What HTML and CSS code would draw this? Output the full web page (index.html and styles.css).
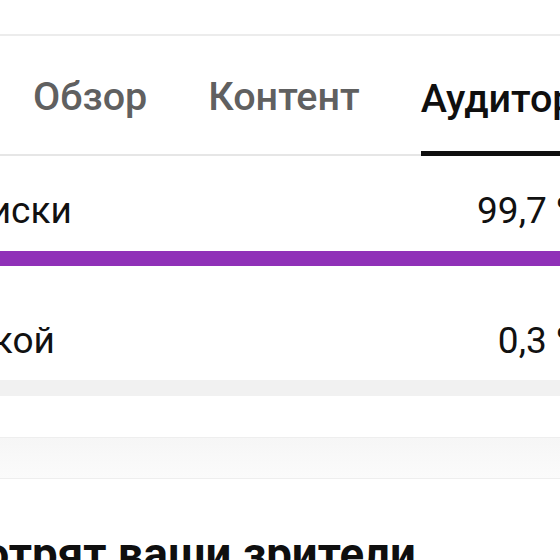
FILE: index.html
```html
<!DOCTYPE html>
<html lang="ru">
<head>
<meta charset="utf-8">
<title>Аудитория</title>
<link rel="stylesheet" href="styles.css">
</head>
<body>
<div class="screen">
  <div class="top-space"></div>
  <nav class="tabs">
    <span class="tab">Обзор</span>
    <span class="tab">Контент</span>
    <span class="tab active">Аудитория</span>
    <span class="tab">Доход</span>
  </nav>
  <section class="stats">
    <div class="row">
      <span class="label">Без подписки</span>
      <span class="value">99,7 %</span>
    </div>
    <div class="bar"><div class="bar-fill" style="width:99.7%"></div></div>
    <div class="row row-second">
      <span class="label">С подпиской</span>
      <span class="value">0,3 %</span>
    </div>
  </section>
  <div class="divider"></div>
  <div class="spacer"></div>
  <div class="card-strip"></div>
  <h2 class="heading">Что смотрят ваши зрители</h2>
</div>
</body>
</html>
```

FILE: styles.css
```css
html, body {
  margin: 0;
  padding: 0;
  background: #ffffff;
  overflow: hidden;
}

body {
  width: 560px;
  height: 560px;
  font-family: Roboto, "Noto Sans", Arial, sans-serif;
  color: #0f0f0f;
}

.screen {
  width: 820px;
  margin-left: -230px;
  display: flex;
  flex-direction: column;
}

.top-space {
  height: 34px;
  border-bottom: 2px solid #ececec;
}

.tabs {
  display: flex;
  align-items: flex-end;
  gap: 61px;
  padding-left: 263px;
  height: 118px;
  border-bottom: 2px solid #e6e6e6;
  white-space: nowrap;
}

.tab {
  font-size: 39.5px;
  font-weight: 500;
  line-height: 44px;
  color: #606060;
  padding-bottom: 35px;
}

.tab.active {
  color: #0f0f0f;
  padding-bottom: 30px;
  border-bottom: 5px solid #0f0f0f;
  margin-bottom: -2px;
}

.stats {
  padding: 34px 0 18px 0;
}

.row {
  display: flex;
  justify-content: space-between;
  padding: 0 7px 0 64px;
  font-size: 37px;
  line-height: 42px;
  color: #111111;
}

.bar {
  margin-top: 19px;
  height: 15px;
  background: #f4e4f7;
}

.bar-fill {
  height: 100%;
  background: #9031b8;
}

.row-second {
  margin-top: 54px;
}

.divider {
  height: 16px;
  background: #f1f1f1;
}

.spacer {
  height: 41px;
}

.card-strip {
  height: 40px;
  background: linear-gradient(#f6f6f6, #fbfbfb);
  border-top: 1px solid #eeeeee;
  border-bottom: 1px solid #eeeeee;
}

.heading {
  margin: 50px 0 0 0;
  padding-left: 64px;
  font-size: 45.6px;
  font-weight: 700;
  line-height: 52px;
  color: #0f0f0f;
  white-space: nowrap;
}
```
